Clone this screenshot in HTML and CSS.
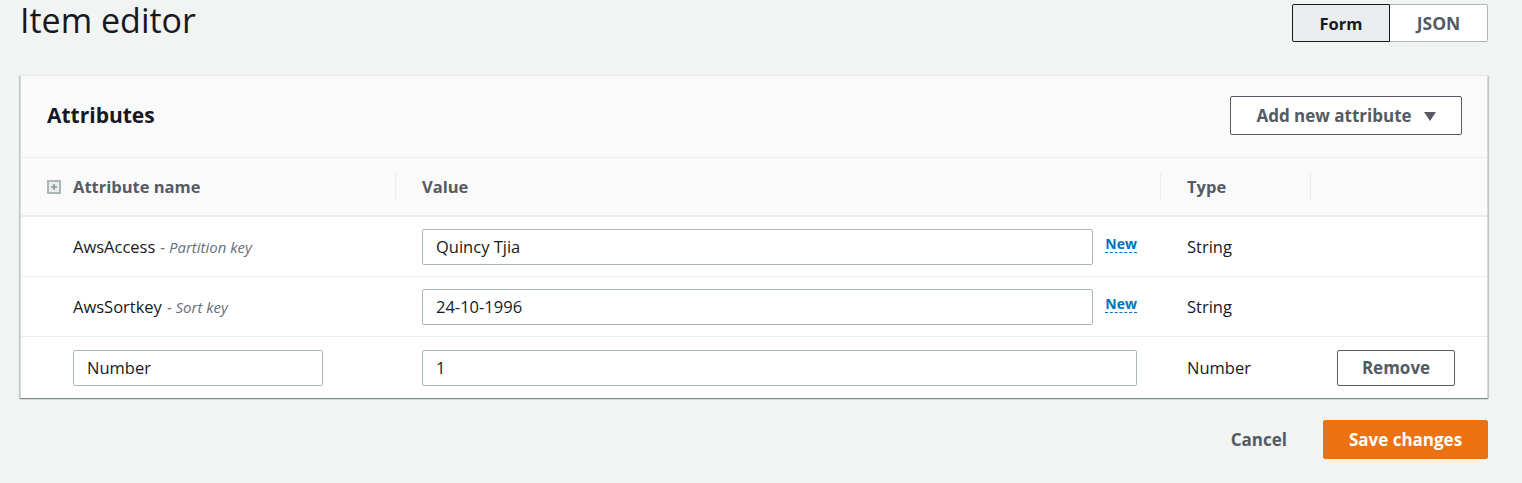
FILE: index.html
```html
<!DOCTYPE html>
<html>
<head>
<meta charset="utf-8">
<link rel="stylesheet" href="styles.css">
</head>
<body>
<div class="page">
  <div class="top">
    <h1 class="title">Item editor</h1>
    <div class="seg">
      <button class="seg-btn active">Form</button>
      <button class="seg-btn">JSON</button>
    </div>
  </div>

  <div class="panel">
    <div class="panel-head">
      <h2 class="panel-title">Attributes</h2>
      <button class="btn add-btn">Add new attribute <span class="caret"></span></button>
    </div>
    <div class="table">
      <div class="row head">
        <div class="cell c1"><span class="expand"><svg width="14" height="14" viewBox="0 0 14 14"><rect x="1" y="1" width="12" height="12" fill="#eaeded" stroke="#aab7b8" stroke-width="2"/><path d="M7 4v6M4 7h6" stroke="#879596" stroke-width="1.6"/></svg></span>Attribute name</div>
        <div class="cell c2 div">Value</div>
        <div class="cell c3 div">Type</div>
        <div class="cell c4 div"></div>
      </div>
      <div class="row">
        <div class="cell c1 name">AwsAccess <span class="key">- Partition key</span></div>
        <div class="cell c2"><input class="input grow" value="Quincy Tjia"><span class="new">New</span></div>
        <div class="cell c3 txt">String</div>
        <div class="cell c4"></div>
      </div>
      <div class="row">
        <div class="cell c1 name">AwsSortkey <span class="key">- Sort key</span></div>
        <div class="cell c2"><input class="input grow" value="24-10-1996"><span class="new">New</span></div>
        <div class="cell c3 txt">String</div>
        <div class="cell c4"></div>
      </div>
      <div class="row last">
        <div class="cell c1"><input class="input name-input" value="Number"></div>
        <div class="cell c2"><input class="input grow" value="1"></div>
        <div class="cell c3 txt">Number</div>
        <div class="cell c4"><button class="btn remove-btn">Remove</button></div>
      </div>
    </div>
  </div>

  <div class="footer">
    <button class="link-btn">Cancel</button>
    <button class="btn primary">Save changes</button>
  </div>
</div>
</body>
</html>
```

FILE: styles.css
```css
* { box-sizing: border-box; }
html, body { margin: 0; padding: 0; }
body {
  background: #f2f3f3;
  font-family: "Open Sans", "Noto Sans", sans-serif;
  color: #16191f;
  width: 1522px;
  height: 483px;
  overflow: hidden;
}
.page { padding: 0 34px 0 20px; }
.top {
  display: flex;
  justify-content: space-between;
  align-items: flex-start;
  height: 75px;
}
.title {
  margin: 0;
  font-weight: 400;
  font-size: 34px;
  line-height: 40px;
  color: #16191f;
}
.seg {
  display: flex;
  margin-top: 4px;
}
button { font-family: inherit; cursor: pointer; }
.seg-btn {
  width: 98px;
  height: 38px;
  border: 1px solid #aab7b8;
  background: #fff;
  color: #545b64;
  font-weight: 700;
  font-size: 16.5px;
  padding: 0;
}
.seg-btn:first-child { border-radius: 2px 0 0 2px; }
.seg-btn:last-child { border-radius: 0 2px 2px 0; border-left: none; font-size: 17.5px; }
.seg-btn.active {
  background: #eaeded;
  border-color: #16191f;
  color: #16191f;
}
.panel {
  background: #fff;
  border: 1px solid #eaeded;
  border-left-color: #d5dbdb;
  border-right-color: #d5dbdb;
  border-bottom: none;
  box-shadow: 0 1px 1px 0 rgba(0,28,36,.3), 1px 1px 1px 0 rgba(0,28,36,.15), -1px 1px 1px 0 rgba(0,28,36,.15);
}
.panel-head {
  height: 82px;
  background: #fafafa;
  border-bottom: 1px solid #eaeded;
  display: flex;
  align-items: center;
  justify-content: space-between;
  padding: 0 25px 3px 26px;
}
.panel-title {
  margin: 0;
  font-size: 21px;
  font-weight: 700;
  color: #16191f;
}
.btn {
  background: #fff;
  border: 1px solid #545b64;
  border-radius: 2px;
  color: #545b64;
  font-weight: 700;
  font-size: 17px;
  padding: 0;
}
.add-btn {
  width: 232px;
  height: 39px;
  display: flex;
  align-items: center;
  justify-content: center;
  gap: 12px;
}
.caret {
  width: 0; height: 0;
  border-left: 6px solid transparent;
  border-right: 6px solid transparent;
  border-top: 9px solid #545b64;
  margin-top: 2px;
}
.row {
  display: grid;
  grid-template-columns: 374px 765px 150px 1fr;
  height: 60px;
  border-bottom: 1px solid #eaeded;
}
.row.last { border-bottom: none; height: 61px; }
.row.head {
  background: #fafafa;
  height: 59px;
  border-bottom: 2px solid #eaeded;
}
.cell {
  display: flex;
  align-items: center;
  padding-left: 27px;
  font-size: 16.5px;
  position: relative;
}
.c1 { padding-left: 52px; }
.head .cell {
  font-weight: 700;
  color: #545b64;
}
.head .c1 { padding-left: 26px; }
.expand { display: flex; margin-right: 12px; }
.head .div::before {
  content: "";
  position: absolute;
  left: 0;
  top: 15px;
  bottom: 15px;
  width: 1px;
  background: #eaeded;
}
.c2 { padding-right: 23px; }
.name { color: #16191f; }
.key {
  font-style: italic;
  color: #687078;
  font-size: 15px;
  margin-left: 5px;
}
.input {
  height: 36px;
  border: 1px solid #aab7b8;
  border-radius: 2px;
  padding: 0 13px;
  font-family: inherit;
  font-size: 16.5px;
  color: #16191f;
  background: #fff;
}
.grow { flex: 1; min-width: 0; }
.name-input { width: 250px; }
.new {
  color: #0073bb;
  font-weight: 700;
  font-size: 14px;
  margin-left: 12px;
  border-bottom: 1px dashed #0073bb;
  line-height: 16px;
  align-self: flex-start;
  margin-top: 19px;
}
.txt { color: #16191f; }
.remove-btn {
  width: 118px;
  height: 36px;
}
.footer {
  display: flex;
  justify-content: flex-end;
  align-items: center;
  margin-top: 22px;
  gap: 36px;
}
.link-btn {
  background: none;
  border: none;
  color: #545b64;
  font-weight: 700;
  font-size: 17px;
  padding: 0;
}
.primary {
  background: #ec7211;
  border-color: #ec7211;
  color: #fff;
  width: 165px;
  height: 39px;
  font-size: 17px;
}
```
